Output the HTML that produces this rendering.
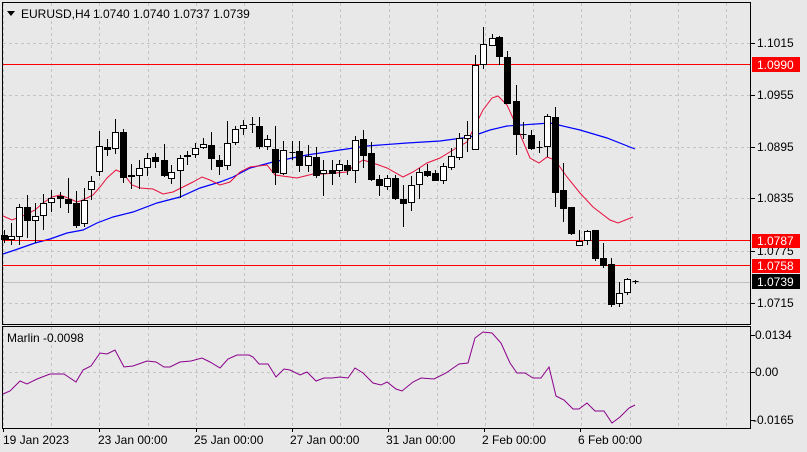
<!DOCTYPE html>
<html><head><meta charset="utf-8"><style>
html,body{margin:0;padding:0;background:#e8e8e8;width:807px;height:452px;overflow:hidden}
svg{display:block;font-family:"Liberation Sans",sans-serif;font-size:12px}
</style></head><body>
<svg id="c" width="807" height="452" viewBox="0 0 807 452" xmlns="http://www.w3.org/2000/svg">
<rect width="807" height="452" fill="#e8e8e8"/>
<g id="grid" stroke="#c4c4c4" stroke-dasharray="3,3" stroke-width="1"></g>
<line x1="3" y1="282.5" x2="750" y2="282.5" stroke="#c0c0c0"/>
<polyline id="blue" fill="none" stroke="#0000ff" stroke-width="1.2"/>
<polyline id="red" fill="none" stroke="#e8103c" stroke-width="1"/>
<line x1="3" y1="64.5" x2="750" y2="64.5" stroke="#ff0000"/>
<line x1="3" y1="240.5" x2="750" y2="240.5" stroke="#ff0000"/>
<line x1="3" y1="265.5" x2="750" y2="265.5" stroke="#ff0000"/>
<g id="candles" stroke="#000" stroke-width="1" shape-rendering="crispEdges"></g>
<polyline id="marlin" fill="none" stroke="#8b008b" stroke-width="1"/>
<rect x="2.5" y="2.5" width="748" height="322" fill="none" stroke="#000"/>
<rect x="2.5" y="326.5" width="748" height="102" fill="none" stroke="#000"/>
<path d="M7 11 L15 11 L11 16 Z" fill="#000"/>
<text x="21" y="18" fill="#000">EURUSD,H4</text>
<text x="93" y="18" fill="#000">1.0740 1.0740 1.0737 1.0739</text>
<text x="7" y="342" fill="#000">Marlin -0.0098</text>
<g fill="#000" stroke="none">
<text x="757" y="47">1.1015</text>
<text x="757" y="99">1.0955</text>
<text x="757" y="151">1.0895</text>
<text x="757" y="202">1.0835</text>
<text x="757" y="255">1.0775</text>
<text x="757" y="307">1.0715</text>
<text x="755" y="339">0.0134</text>
<text x="755" y="376">0.00</text>
<text x="753" y="424">-0.0165</text>
</g>
<g stroke="#000">
<line x1="751" y1="43.5" x2="755" y2="43.5"/><line x1="751" y1="95.5" x2="755" y2="95.5"/>
<line x1="751" y1="147.5" x2="755" y2="147.5"/><line x1="751" y1="198.5" x2="755" y2="198.5"/>
<line x1="751" y1="251.5" x2="755" y2="251.5"/><line x1="751" y1="303.5" x2="755" y2="303.5"/>
<line x1="751" y1="335.5" x2="755" y2="335.5"/><line x1="751" y1="372.5" x2="755" y2="372.5"/>
<line x1="751" y1="420.5" x2="755" y2="420.5"/>
</g>
<rect x="752" y="57" width="48" height="15" fill="#ff0000"/>
<text x="757" y="69" fill="#fff">1.0990</text>
<rect x="752" y="234" width="48" height="14" fill="#ff0000"/>
<text x="757" y="245" fill="#fff">1.0787</text>
<rect x="752" y="259" width="48" height="14" fill="#ff0000"/>
<text x="757" y="270" fill="#fff">1.0758</text>
<rect x="752" y="274" width="48" height="15" fill="#000"/>
<text x="757" y="286" fill="#fff">1.0739</text>
<g id="ticks" stroke="#000"></g>
<g fill="#000">
<text x="3" y="444">19 Jan 2023</text>
<text x="98" y="444">23 Jan 00:00</text>
<text x="194" y="444">25 Jan 00:00</text>
<text x="290" y="444">27 Jan 00:00</text>
<text x="386" y="444">31 Jan 00:00</text>
<text x="482" y="444">2 Feb 00:00</text>
<text x="578" y="444">6 Feb 00:00</text>
</g>
</svg>
<script>
var NS="http://www.w3.org/2000/svg";
function el(p,t,a){var e=document.createElementNS(NS,t);for(var k in a)e.setAttribute(k,a[k]);p.appendChild(e);return e;}
var g=document.getElementById('grid');
for(var x=3;x<750;x+=48.2){var xx=Math.round(x)+0.5;el(g,'line',{x1:xx,y1:3,x2:xx,y2:324});el(g,'line',{x1:xx,y1:327,x2:xx,y2:428});}
[43,95,147,198,251,303].forEach(function(y){el(g,'line',{x1:3,y1:y+0.5,x2:750,y2:y+0.5});});
el(g,'line',{x1:3,y1:372.5,x2:750,y2:372.5});
var tk=document.getElementById('ticks');
[3,99,196,292,388,484,580].forEach(function(x){el(tk,'line',{x1:x+0.5,y1:428,x2:x+0.5,y2:432});});
var C=[[4,235,239,230,243,1],[11,236,239,223,245,0],[19,207,236,204,245,0],[27,207,220,195,238,1],[35,216,220,203,243,0],[43,203,215,194,230,0],[51,198,202,190,212,0],[60,196,198,192,208,1],[68,199,203,178,213,1],[76,203,225,191,228,1],[84,200,223,188,227,0],[91,181,189,176,200,0],[99,146,171,131,176,0],[107,147,149,139,156,1],[115,132,148,119,154,0],[123,132,177,129,183,1],[131,175,176,164,189,1],[139,168,175,160,189,0],[147,158,167,153,176,0],[155,157,161,153,168,1],[164,160,175,144,177,1],[171,172,178,165,184,0],[180,158,170,155,198,0],[187,155,156,151,165,1],[195,148,154,143,158,0],[203,144,147,138,149,0],[211,145,158,132,170,1],[219,160,166,155,175,1],[227,143,165,121,170,0],[235,129,142,126,145,0],[243,125,128,120,135,0],[252,124,124,117,133,1],[259,126,146,117,149,1],[267,139,146,135,150,0],[275,149,172,126,185,1],[283,150,173,141,175,0],[292,152,152,141,160,1],[299,151,165,141,172,1],[308,156,165,145,172,0],[316,157,175,147,178,1],[323,170,173,160,196,0],[332,170,173,160,185,1],[339,164,170,160,177,0],[347,165,170,160,175,1],[355,140,170,136,183,0],[363,139,155,130,168,1],[371,153,179,142,181,1],[379,179,185,175,196,1],[387,178,186,175,190,0],[395,178,198,175,200,1],[403,199,203,185,227,1],[411,185,202,176,211,0],[419,172,184,168,199,0],[427,171,175,164,177,1],[435,173,180,170,181,1],[443,166,180,163,184,0],[451,156,167,148,170,0],[459,138,157,133,160,0],[467,135,138,121,152,0],[475,65,149,55,150,0],[483,44,64,27,69,0],[492,38,45,34,45,0],[499,37,56,36,65,1],[507,57,103,51,103,1],[516,101,134,85,155,1],[523,134,134,122,139,1],[531,135,148,130,150,1],[539,147,147,141,153,1],[547,116,146,114,157,0],[555,117,192,107,207,1],[563,190,208,163,222,1],[571,207,233,207,235,1],[579,241,245,230,246,0],[587,231,240,230,245,0],[595,230,258,230,261,1],[603,258,265,243,268,1],[611,264,304,258,307,1],[619,293,303,282,307,0],[627,279,292,278,295,0],[635,281,281,280,284,1]];
var cg=document.getElementById('candles');
C.forEach(function(c){var x=c[0]+0.5;el(cg,'line',{x1:x,y1:c[3],x2:x,y2:c[4]});
if(c[2]-c[1]<1){el(cg,'line',{x1:x-3,y1:c[1]+0.5,x2:x+3,y2:c[1]+0.5});}
else{el(cg,'rect',{x:c[0]-2.5,y:c[1]+0.5,width:6,height:c[2]-c[1],fill:c[5]?'#000':'#fff'});}});
function pts(a){return a.map(function(p){return p.join(',')}).join(' ');}
document.getElementById('red').setAttribute('points',pts([[3,216],[12,220],[25,215],[35,210],[43,203],[52,197],[60,195],[68,198],[77,202],[83,200],[93,195],[100,187],[107,178],[116,170],[123,173],[132,185],[140,188],[153,189],[163,194],[173,192],[183,187],[193,182],[202,177],[210,180],[220,185],[230,182],[240,172],[250,167],[267,165],[275,175],[297,178],[313,174],[323,174],[347,172],[355,165],[363,160],[373,163],[387,168],[403,177],[413,172],[427,163],[440,158],[453,150],[467,142],[473,130],[483,110],[492,98],[498,96],[507,105],[517,127],[530,158],[539,163],[547,157],[555,160],[567,177],[580,193],[593,207],[610,220],[618,223],[633,217]]));
document.getElementById('blue').setAttribute('points',pts([[3,254],[15,250],[35,243],[50,239],[67,233],[83,230],[97,223],[113,217],[133,212],[157,203],[180,197],[200,188],[220,182],[233,177],[250,168],[273,162],[307,155],[340,150],[367,146],[407,143],[440,141],[470,137],[490,130],[507,126],[550,123],[580,130],[607,138],[635,149]]));
document.getElementById('marlin').setAttribute('points',pts([[3,394],[10,391],[20,381],[27,384],[37,379],[50,374],[64,374],[76,382],[83,370],[91,366],[100,353],[107,354],[115,350],[124,367],[133,366],[147,361],[156,362],[164,367],[170,367],[180,362],[191,361],[202,358],[210,362],[220,368],[228,359],[237,355],[249,355],[253,357],[259,364],[268,364],[276,377],[284,369],[290,370],[300,375],[307,372],[316,381],[324,378],[332,378],[340,377],[348,378],[355,368],[363,373],[373,383],[381,385],[387,382],[396,389],[402,391],[413,382],[421,378],[434,379],[446,373],[459,364],[468,363],[475,338],[483,332],[492,333],[501,343],[510,363],[517,373],[525,373],[533,378],[541,378],[549,367],[556,396],[564,400],[573,409],[579,409],[587,403],[595,411],[604,411],[612,423],[620,417],[629,408],[635,405]]));
</script>
</body></html>
